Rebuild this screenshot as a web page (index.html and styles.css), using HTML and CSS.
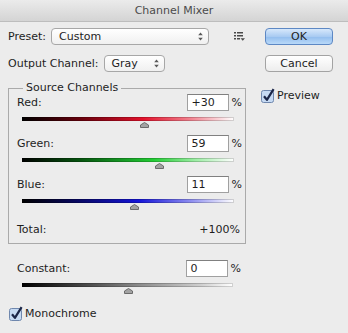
FILE: index.html
```html
<!DOCTYPE html>
<html lang="en">
<head>
    <meta charset="UTF-8">
    <title>Channel Mixer</title>
    <link rel="stylesheet" href="styles.css">
</head>
<body>
<div class="window">
    <div class="titlebar">Channel Mixer</div>

    <div class="dialog">
        <div class="main">
            <div class="row">
                <span>Preset:</span>
                <div class="popup popup-preset">
                    <span class="popup-text">Custom</span>
                    <svg class="stepper" width="5" height="9" viewBox="0 0 5 9"><path d="M2.5 0.5 L4.8 3.3 H0.2z M0.2 5.7 H4.8 L2.5 8.5z" fill="#5a5a5a"/></svg>
                </div>
                <svg class="panel-menu" width="11" height="9" viewBox="0 0 11 9">
                    <g fill="#4a4a4a">
                        <rect x="0" y="0" width="2" height="1.5"/><rect x="3" y="0" width="6" height="1.5"/>
                        <rect x="0" y="3" width="2" height="1.5"/><rect x="3" y="3" width="6" height="1.5"/>
                        <rect x="0" y="6" width="2" height="1.5"/><rect x="3" y="6" width="3" height="1.5"/>
                        <path d="M6.5 6.3 H11 L8.75 8.8z"/>
                    </g>
                </svg>
            </div>
            <div class="row output-row">
                <span>Output Channel:</span>
                <div class="popup popup-output">
                    <span class="popup-text">Gray</span>
                    <svg class="stepper" width="5" height="9" viewBox="0 0 5 9"><path d="M2.5 0.5 L4.8 3.3 H0.2z M0.2 5.7 H4.8 L2.5 8.5z" fill="#5a5a5a"/></svg>
                </div>
            </div>

            <!-- Source channels group -->
            <div class="group">
                <div class="group-title">Source Channels</div>

                <div class="channel">
                    <div class="value-row"><span class="label">Red:</span><span class="field">+30</span><span class="pct">%</span></div>
                    <div class="track track-red"></div>
                    <div class="thumbs"><svg class="thumb" style="left: 57.5%" width="9" height="6" viewBox="0 0 9 6"><path d="M4.5 0.5 L8.5 3 V5.5 H0.5 V3z" fill="#a3a3a3" stroke="#6b6b6b"/></svg></div>
                </div>

                <div class="channel">
                    <div class="value-row"><span class="label">Green:</span><span class="field">59</span><span class="pct">%</span></div>
                    <div class="track track-green"></div>
                    <div class="thumbs"><svg class="thumb" style="left: 64.75%" width="9" height="6" viewBox="0 0 9 6"><path d="M4.5 0.5 L8.5 3 V5.5 H0.5 V3z" fill="#a3a3a3" stroke="#6b6b6b"/></svg></div>
                </div>

                <div class="channel">
                    <div class="value-row"><span class="label">Blue:</span><span class="field">11</span><span class="pct">%</span></div>
                    <div class="track track-blue"></div>
                    <div class="thumbs"><svg class="thumb" style="left: 52.75%" width="9" height="6" viewBox="0 0 9 6"><path d="M4.5 0.5 L8.5 3 V5.5 H0.5 V3z" fill="#a3a3a3" stroke="#6b6b6b"/></svg></div>
                </div>

                <div class="total-row"><span>Total:</span><span>+100%</span></div>
            </div>

            <div class="channel constant">
                <div class="value-row"><span class="label">Constant:</span><span class="field">0</span><span class="pct">%</span></div>
                <div class="track track-gray"></div>
                <div class="thumbs"><svg class="thumb" style="left: 50%" width="9" height="6" viewBox="0 0 9 6"><path d="M4.5 0.5 L8.5 3 V5.5 H0.5 V3z" fill="#a3a3a3" stroke="#6b6b6b"/></svg></div>
            </div>

            <div class="check monochrome">
                <svg width="15" height="15" viewBox="0 0 15 15"><rect x="1.5" y="2.5" width="12" height="12" rx="2" fill="#c6daf3" stroke="#6f87ad"/><path d="M4 8.3 L6.9 11.8 L13.6 1.2" fill="none" stroke="#1b2648" stroke-width="2.2" stroke-linejoin="round"/></svg>
                <span>Monochrome</span>
            </div>
        </div>

        <div class="side">
            <button class="btn btn-default">OK</button>
            <button class="btn btn-cancel">Cancel</button>
            <div class="check preview">
                <svg width="15" height="15" viewBox="0 0 15 15"><rect x="1.5" y="2.5" width="12" height="12" rx="2" fill="#c6daf3" stroke="#6f87ad"/><path d="M4 8.3 L6.9 11.8 L13.6 1.2" fill="none" stroke="#1b2648" stroke-width="2.2" stroke-linejoin="round"/></svg>
                <span>Preview</span>
            </div>
        </div>
    </div>
</div>
</body>
</html>
```

FILE: styles.css
```css
html, body {
    margin: 0;
}
body {
    font-family: "DejaVu Sans", sans-serif;
    font-size: 11px;
    line-height: 13px;
    color: #1e1e1e;
    background: #ececec;
}
.window {
    width: 348px;
    height: 333px;
    overflow: hidden;
    background: #ececec;
}
.titlebar {
    height: 22px;
    line-height: 21px;
    box-sizing: border-box;
    text-align: center;
    color: #4b4b4b;
    background: linear-gradient(#ebebeb, #d4d4d4);
    border-bottom: 1px solid #bdbdbd;
}
.dialog {
    display: flex;
    padding: 6px 15px 0 8px;
}
.main {
    width: 238px;
}
.side {
    flex: 1;
    margin-left: 14px;
}

/* top rows */
.row {
    display: flex;
    align-items: center;
    height: 17px;
    gap: 5px;
}
.output-row {
    margin-top: 10px;
}
.popup {
    display: flex;
    align-items: center;
    height: 17px;
    box-sizing: border-box;
    padding: 0 5px 0 7px;
    border: 1px solid #a7a7a7;
    border-radius: 4px;
    background: linear-gradient(#ffffff, #f0f0f0);
}
.popup-text {
    flex: 1;
}
.popup-preset {
    width: 158px;
}
.popup-output {
    width: 61px;
}
.panel-menu {
    margin-left: 20px;
}

/* group box */
.group {
    margin-top: 16px;
    border: 1px solid #aaaaaa;
    padding: 0 3px 5px 8px;
}
.group-title {
    display: table;
    margin: -8px 0 0 6px;
    padding: 0 3px;
    background: #ececec;
}
.group .channel:first-of-type {
    margin-top: 4px;
}
.channel + .channel {
    margin-top: 7px;
}
.value-row {
    display: flex;
    align-items: center;
    height: 17px;
}
.value-row .label {
    flex: 1;
}
.field {
    width: 42px;
    height: 17px;
    box-sizing: border-box;
    padding-left: 4px;
    line-height: 15px;
    background: #fff;
    border: 1px solid #a0a0a0;
    border-top-color: #808080;
}
.pct {
    margin-left: 3px;
}
.track {
    height: 4px;
    margin: 6px 8px 0 5px;
    box-shadow: inset 0 0 0 1px rgba(0, 0, 0, 0.18);
}
.track-red {
    background: linear-gradient(to right, #000 0%, #6a000c 28%, #e3112b 57%, #f27a88 78%, #fff 100%);
}
.track-green {
    background: linear-gradient(to right, #000 0%, #06560f 28%, #22cc34 62%, #9eeea6 82%, #fff 100%);
}
.track-blue {
    background: linear-gradient(to right, #000 0%, #07075e 25%, #1414d8 55%, #8585ef 78%, #fff 100%);
}
.track-gray {
    background: linear-gradient(to right, #000 0%, #555 35%, #8a8a8a 55%, #d0d0d0 85%, #fff 100%);
}
.thumbs {
    position: relative;
    height: 6px;
    margin: 1px 8px 0 5px;
}
.thumb {
    position: absolute;
    top: 0;
    margin-left: -4px;
}
.total-row {
    display: flex;
    justify-content: space-between;
    align-items: center;
    height: 17px;
    margin-top: 11px;
    padding-right: 2px;
}
.constant {
    margin-top: 16px;
    padding: 0 5px 0 9px;
}

/* checkboxes */
.check {
    display: flex;
    align-items: center;
    gap: 2px;
    height: 15px;
}
.monochrome {
    margin-top: 12px;
}
.preview {
    margin-top: 16px;
}

/* buttons */
.btn {
    display: block;
    width: 68px;
    height: 17px;
    margin-left: 5px;
    padding: 0;
    box-sizing: border-box;
    font: inherit;
    line-height: 15px;
    color: #1e1e1e;
    border: 1px solid #a3a3a3;
    border-radius: 4px;
    background: linear-gradient(#ffffff, #ededed);
}
.btn-default {
    border-color: #5d88c4;
    background: linear-gradient(#d7e8fb, #a9cbf2 50%, #92bdee 51%, #b9d9f9);
}
.btn-cancel {
    margin-top: 10px;
}
```
